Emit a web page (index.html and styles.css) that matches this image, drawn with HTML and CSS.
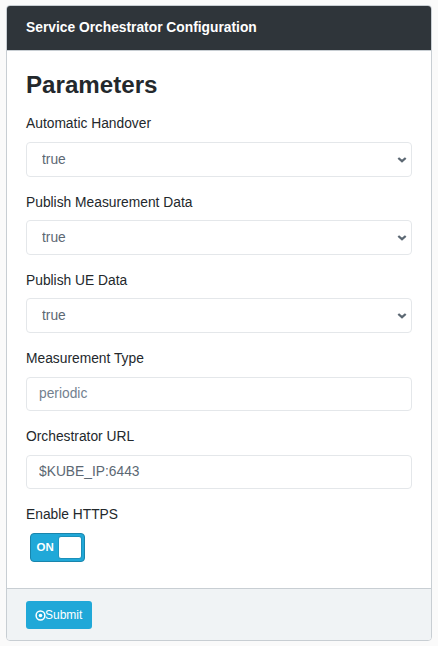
FILE: index.html
```html
<!DOCTYPE html>
<html lang="en">
<head>
<meta charset="utf-8">
<title>Service Orchestrator Configuration</title>
<link rel="stylesheet" href="styles.css">
</head>
<body>
<form class="card">
  <header class="card-header">Service Orchestrator Configuration</header>
  <div class="card-body">
    <h2 class="title">Parameters</h2>
    <div class="group">
      <label class="label" for="handover">Automatic Handover</label>
      <div class="select"><select class="control" id="handover"><option>true</option><option>false</option></select><svg class="chevron" viewBox="0 0 10 6"><path d="M1.300 1 5 4.200 8.700 1"/></svg></div>
    </div>
    <div class="group">
      <label class="label" for="measurement">Publish Measurement Data</label>
      <div class="select"><select class="control" id="measurement"><option>true</option><option>false</option></select><svg class="chevron" viewBox="0 0 10 6"><path d="M1.300 1 5 4.200 8.700 1"/></svg></div>
    </div>
    <div class="group">
      <label class="label" for="ue">Publish UE Data</label>
      <div class="select"><select class="control" id="ue"><option>true</option><option>false</option></select><svg class="chevron" viewBox="0 0 10 6"><path d="M1.300 1 5 4.200 8.700 1"/></svg></div>
    </div>
    <div class="group">
      <label class="label" for="type">Measurement Type</label>
      <input class="control" id="type" type="text" placeholder="periodic">
    </div>
    <div class="group">
      <label class="label" for="url">Orchestrator URL</label>
      <input class="control" id="url" type="text" value="$KUBE_IP:6443">
    </div>
    <div class="group">
      <span class="label">Enable HTTPS</span>
      <div class="switch"><span class="switch-text">ON</span><span class="switch-handle"></span></div>
    </div>
  </div>
  <footer class="card-footer">
    <button class="submit" type="button"><svg class="icon" viewBox="0 0 11 11"><circle cx="5.500" cy="5.500" r="4.400" fill="none" stroke="currentColor" stroke-width="1.500"/><circle cx="5.500" cy="5.500" r="1.800" fill="currentColor"/></svg>Submit</button>
  </footer>
</form>
</body>
</html>
```
FILE: styles.css
```css
* {
  box-sizing: border-box;
}

body {
  margin: 0;
  padding: 5px 6px;
  background: #fafafa;
  color: #23282c;
  font: 13.8px/21px "Liberation Sans", Arial, sans-serif;
}

.card {
  display: flex;
  flex-direction: column;
  height: 636px;
  margin: 0;
  overflow: hidden;
  border: 1px solid #c8ced3;
  border-radius: 4px;
  background: #fff;
}

.card-header {
  height: 45px;
  padding: 11px 19px;
  border-bottom: 1px solid #c8ced3;
  background: #2f353a;
  color: #fff;
  font-weight: 700;
}

.card-body {
  flex: 1;
  padding: 19px 19px 0;
}

.title {
  margin: 0 0 8px;
  font-size: 24.15px;
  line-height: 30px;
}

.group {
  height: 78.2px;
  padding-top: 5.4px;
}

.label {
  display: block;
  height: 28.6px;
}

.control {
  display: block;
  width: 100%;
  height: 34px;
  padding: 5px 12px 6px;
  border: 1px solid #e4e7ea;
  border-radius: 4px;
  background-color: #fff;
  color: #5c6873;
  font: inherit;
}

.select {
  position: relative;
}

select.control {
  height: 35px;
  padding: 5px 15px;
  appearance: none;
}

.chevron {
  position: absolute;
  top: 15px;
  right: 5px;
  width: 10px;
  height: 6px;
  fill: none;
  stroke: #5c6873;
  stroke-width: 2.3;
  pointer-events: none;
}

.control::placeholder {
  color: #73818f;
  opacity: 1;
}

.switch {
  display: flex;
  align-items: center;
  justify-content: space-between;
  width: 55px;
  height: 29px;
  margin-left: 4px;
  padding: 0 2px 0 5.5px;
  border: 1px solid #1985ac;
  border-radius: 4px;
  background: #20a8d8;
  color: #fff;
}

.switch-text {
  font-size: 11.5px;
  font-weight: 700;
}

.switch-handle {
  width: 24px;
  height: 23px;
  border: 1px solid #1b90ba;
  border-left-color: #1c97c2;
  border-radius: 3px;
  background: #fff;
}

.card-footer {
  height: 52px;
  padding: 12px 19px;
  border-top: 1px solid #c8ced3;
  background: #f0f3f5;
}

.submit {
  display: flex;
  align-items: center;
  width: 66px;
  height: 28px;
  padding: 0 0 0 8.5px;
  border: 0;
  border-radius: 3px;
  background: #20a8d8;
  color: #fff;
  font: 12px/18px "Liberation Sans", Arial, sans-serif;
}

.icon {
  width: 11px;
  height: 11px;
  margin-right: -0.5px;
}
```
